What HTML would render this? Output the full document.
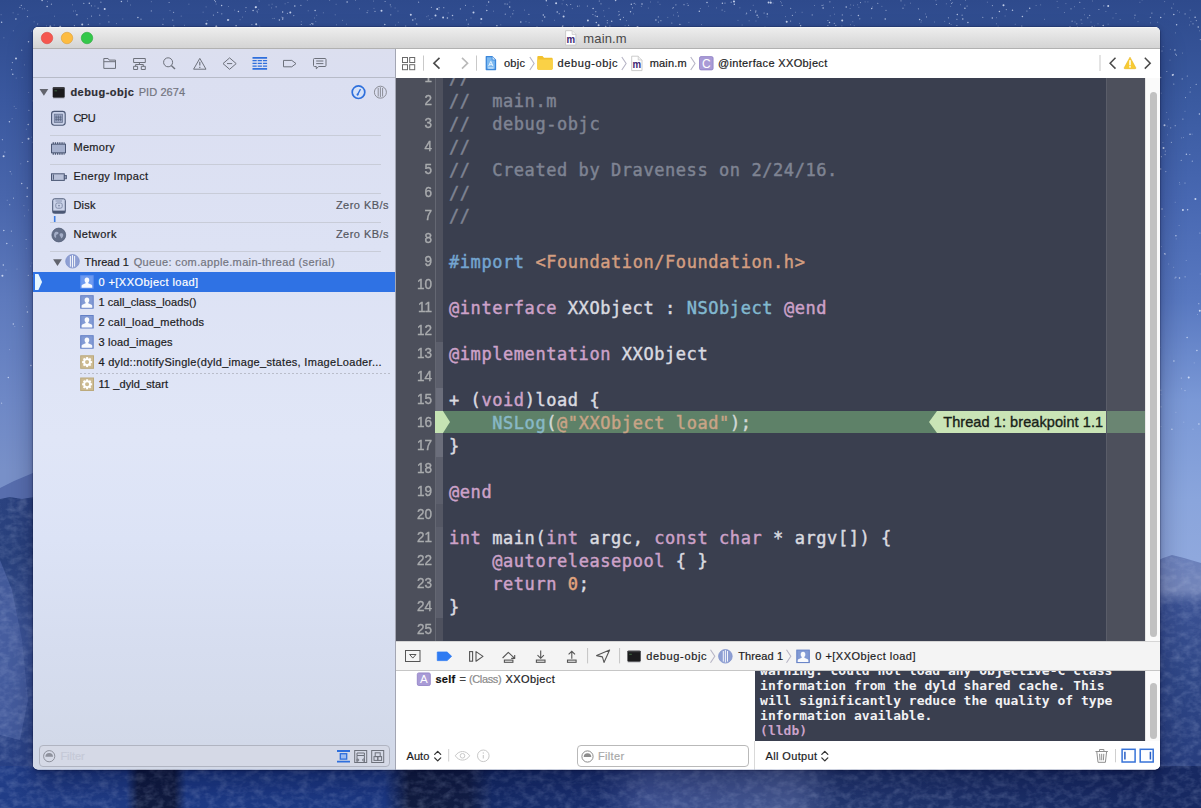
<!DOCTYPE html>
<html lang="en">
<head>
<meta charset="utf-8">
<title>main.m</title>
<style>
*{box-sizing:border-box;margin:0;padding:0}
html,body{width:1201px;height:808px;overflow:hidden}
body{position:relative;font-family:"Liberation Sans",sans-serif;font-size:11px;color:#1c1c1e;background:#3d5a9e}
.a,.t{position:absolute}
.t{white-space:nowrap;-webkit-text-stroke:.2px}
#bg{left:0;top:0;width:1201px;height:808px}
#shadow{left:33px;top:27px;width:1127px;height:742.5px;border-radius:5px;box-shadow:0 14px 26px rgba(0,5,40,.32),0 0 0 .5px rgba(0,0,30,.3),0 1px 5px rgba(0,0,30,.25)}
#win{left:0;top:0;width:1201px;height:808px;clip-path:inset(27px 41px 38.5px 33px round 5px);background:#fff}
#title{left:33px;top:27px;width:1127px;height:22px;background:linear-gradient(#ededed,#d4d4d4);border-bottom:1px solid #b1b1b1;border-top:1px solid #f6f6f6}
#side{left:33px;top:49px;width:362px;height:721px;background:linear-gradient(180deg,#dcdfef 0.0%,#dbdff1 4.0%,#dde2f4 27.9%,#e0e6f7 54.2%,#dce3f6 68.1%,#d6ddef 83.4%,#d2d9e9 96.5%,#d2d8e6 100.0%)}
#sidebd{left:395px;top:49px;width:1px;height:721px;background:#a3a6b3}
#navbd{left:33px;top:77px;width:362px;height:1px;background:#b7bbc8}
.sep{left:50px;width:331px;height:1px;background:#c8ccd8}
#sel{left:33px;top:272px;width:362px;height:20px;background:#2f72e4}
#dash{left:80px;top:373px;width:311px;height:1px;background:repeating-linear-gradient(90deg,#b9bdca 0 2px,transparent 2px 4px)}
#sfilter{left:38.5px;top:745px;width:351px;height:21.5px;border:1px solid #b0b4c1;border-radius:4px;background:#d5d9e6}
#jump{left:396px;top:49px;width:764px;height:29px;background:#fff}
#editor{left:396px;top:78px;width:749px;height:563px;background:#3a3f4f;overflow:hidden}
#gutter{left:0;top:0;width:39px;height:563px;background:#4c4f5b}
.rib{left:39px;width:8px}
#rcol{left:710px;top:0;width:39px;height:563px;background:#4d505c}
#hl{left:39px;top:333px;width:710px;height:22px;background:#5e8168}
#bplabel{left:533px;top:333px;width:177px;height:22px;background:#c9e4b6;clip-path:polygon(8px 0,100% 0,100% 100%,8px 100%,0 50%)}
#pc{left:39px;top:333px;width:15px;height:22px;background:#c5e3b3;clip-path:polygon(0 0,8px 0,100% 50%,8px 100%,0 100%)}
#scroll1{left:1145px;top:78px;width:15px;height:563px;background:#fafafa;border-left:1px solid #e7e7e7}
.thumb{background:#c1c1c1;border-radius:4px}
.ln{left:0;width:36px;text-align:right;font-size:15px;color:#a9abae;height:23px;line-height:23px;margin-top:-.9px;transform:scaleX(.9);transform-origin:100% 50%;-webkit-text-stroke:.4px}
.cl{left:53px;font-family:"DejaVu Sans Mono","Liberation Mono",monospace;font-size:17px;letter-spacing:.566px;height:23px;line-height:23px;white-space:pre;color:#dadbe0;-webkit-text-stroke:.45px}
.c{color:#7f8493}.h16 .s{color:#c8a487}.h16 .tt{color:#88b8c7}.h16{color:#d2d8d6}.k{color:#cda2c9}.s{color:#d39e80}.tt{color:#82b9d0}.p{color:#74a5d0}.n{color:#e2a57e}
#dbar{left:396px;top:641px;width:764px;height:30px;background:#f4f4f4;border-top:1px solid #d5d5d5;border-bottom:1px solid #c6c6c6}
#vars{left:396px;top:671px;width:358px;height:99px;background:#fff}
#varsbd{left:754px;top:741px;width:1px;height:29px;background:#d9d9d9}
#cons{left:754.5px;top:671px;width:390.5px;height:70px;background:#3a3f4f;overflow:hidden}
#scroll2{left:1145px;top:671px;width:15px;height:70px;background:#fafafa;border-left:1px solid #e7e7e7}
#consbar{left:755px;top:741px;width:405px;height:29px;background:#fff}
#vfilter{left:576.5px;top:745px;width:172.5px;height:21.5px;border:1px solid #b9b9b9;border-radius:4px;background:#fff}
.ct{left:5.6px;font-family:"DejaVu Sans Mono","Liberation Mono",monospace;font-size:13px;font-weight:bold;color:#f2f2f4;white-space:pre;height:15px;line-height:15px}
svg{position:absolute;left:0;top:0}
</style>
</head>
<body>
<div id="bg" class="a"><svg id="bgsvg" width="1201" height="808" viewBox="0 0 1201 808">
<defs>
<linearGradient id="sky" x1="0" y1="0" x2="0" y2="1"><stop offset="0.000" stop-color="#2e4a8c"/><stop offset="0.124" stop-color="#3a589f"/><stop offset="0.248" stop-color="#4966ac"/><stop offset="0.371" stop-color="#5e7abd"/><stop offset="0.495" stop-color="#6e88c6"/><stop offset="0.582" stop-color="#7890c8"/><stop offset="1.000" stop-color="#7890c8"/></linearGradient><linearGradient id="skyr" x1="0" y1="0" x2="0" y2="1"><stop offset="0.000" stop-color="#2e4a8c"/><stop offset="0.124" stop-color="#3a5aa0"/><stop offset="0.248" stop-color="#4868b2"/><stop offset="0.371" stop-color="#5878c0"/><stop offset="0.495" stop-color="#7a98d6"/><stop offset="0.619" stop-color="#8aa5dc"/><stop offset="0.693" stop-color="#8fa8dd"/><stop offset="1.000" stop-color="#8fa8dd"/></linearGradient>
<linearGradient id="mtl" x1="0" y1="0" x2="0" y2="1"><stop offset="0" stop-color="#2b427f"/><stop offset=".2" stop-color="#28407c"/><stop offset=".45" stop-color="#3b5395"/><stop offset=".75" stop-color="#2f4789"/><stop offset="1" stop-color="#1f3880"/></linearGradient>
<linearGradient id="mtr" x1="0" y1="555" x2="0" y2="808" gradientUnits="userSpaceOnUse"><stop offset="0.000" stop-color="#6a80bb"/><stop offset="0.067" stop-color="#6e82ba"/><stop offset="0.138" stop-color="#7486ba"/><stop offset="0.198" stop-color="#3a5193"/><stop offset="0.494" stop-color="#2e4686"/><stop offset="1.000" stop-color="#24397a"/></linearGradient>
<linearGradient id="mtb" x1="0" y1="0" x2="1" y2="0"><stop offset="0" stop-color="#213d87"/><stop offset=".105" stop-color="#1f3b85"/><stop offset=".115" stop-color="#101b40"/><stop offset=".145" stop-color="#101b40"/><stop offset=".155" stop-color="#1d3a86"/><stop offset=".32" stop-color="#1c3883"/><stop offset=".34" stop-color="#111c40"/><stop offset=".39" stop-color="#121e46"/><stop offset=".41" stop-color="#152b68"/><stop offset=".5" stop-color="#1b3070"/><stop offset=".54" stop-color="#3c4f8f"/><stop offset=".66" stop-color="#44568f"/><stop offset=".7" stop-color="#22366f"/><stop offset=".85" stop-color="#1b2e67"/><stop offset=".96" stop-color="#172962"/><stop offset="1" stop-color="#172962"/></linearGradient>
<linearGradient id="shd" x1="0" y1="0" x2="0" y2="1"><stop offset="0" stop-color="#000a20" stop-opacity=".0"/><stop offset="1" stop-color="#000a20" stop-opacity="0"/></linearGradient>
<filter id="nz" x="0" y="0" width="100%" height="100%"><feTurbulence type="fractalNoise" baseFrequency=".11 .16" numOctaves="3" seed="4" result="n"/><feColorMatrix type="matrix" values="0 0 0 0 .5  0 0 0 0 .58  0 0 0 0 .82  1.8 0 0 0 -.7"/></filter>
<clipPath id="mc"><path d="M0 499 L10 497 L22 499 L40 496 L40 808 L0 808Z"/><path d="M1155 560 L1166 556 L1178 558 L1190 560 L1201 562 L1201 808 L1155 808Z"/><rect x="0" y="766" width="1201" height="42"/></clipPath>
</defs>
<rect width="1201" height="808" fill="url(#sky)"/><rect x="600" width="601" height="808" fill="url(#skyr)"/>
<path d="M952.4 2.5h.01M785.4 16.6h.01M18.0 14.3h.01M228.4 6.5h.01M795.6 12.3h.01M850.1 8.5h.01M480.9 22.9h.01M1150.6 22.9h.01M1177.4 10.7h.01M756.0 21.0h.01M910.4 3.2h.01M229.0 19.8h.01M773.1 3.1h.01M395.1 8.0h.01M108.2 15.7h.01M1040.7 4.9h.01M1091.0 22.1h.01M724.8 11.4h.01M46.5 26.0h.01M716.4 7.9h.01M865.1 1.9h.01M336.5 24.8h.01M72.6 4.8h.01M687.2 3.6h.01M830.2 15.8h.01M841.9 26.0h.01M383.0 27.0h.01M1081.9 23.5h.01M529.1 22.6h.01M307.3 0.3h.01M814.4 5.5h.01M1098.0 23.8h.01M700.3 8.5h.01M854.2 25.7h.01M203.1 12.2h.01M1179.4 12.2h.01M37.8 23.6h.01M851.1 15.4h.01M950.6 0.5h.01M285.1 3.8h.01M857.7 4.8h.01M738.0 20.4h.01M951.1 24.5h.01M1120.1 19.5h.01M34.1 21.8h.01M960.6 4.7h.01M946.3 3.8h.01M1139.9 2.3h.01M672.5 8.4h.01M1015.2 24.3h.01M604.3 16.3h.01M1164.3 13.9h.01M323.3 12.8h.01M572.3 8.6h.01M742.1 25.0h.01M935.9 0.6h.01M272.9 18.5h.01M426.8 16.7h.01M524.6 10.1h.01M635.7 4.3h.01M1084.1 8.5h.01M1065.9 3.6h.01M872.6 7.0h.01M1094.6 26.1h.01M823.5 5.1h.01M618.3 15.4h.01M1189.4 25.0h.01M486.8 5.3h.01M934.4 22.0h.01M921.5 20.7h.01M867.9 1.9h.01M563.1 0.3h.01M767.1 16.8h.01M1134.6 18.0h.01M308.2 10.8h.01M234.7 10.1h.01M54.2 25.1h.01M355.5 0.4h.01M573.6 26.3h.01M547.3 5.5h.01M802.1 12.3h.01M881.9 6.4h.01M904.8 5.1h.01M47.4 1.6h.01M510.7 16.8h.01M650.5 2.0h.01M448.2 12.9h.01M749.1 20.8h.01M1105.9 11.5h.01M116.5 23.6h.01M833.5 7.6h.01M429.7 19.6h.01M526.0 21.7h.01M1074.6 6.7h.01M439.0 9.8h.01M1058.0 7.6h.01M626.4 20.6h.01M850.5 24.7h.01M852.8 21.7h.01M1190.2 10.1h.01M245.4 11.5h.01M1164.7 1.6h.01M701.5 24.6h.01M130.5 5.0h.01M269.0 5.0h.01M207.2 20.5h.01M579.6 6.0h.01M1138.0 21.6h.01M633.6 13.9h.01M1189.3 17.8h.01M13.1 12.8h.01M188.9 4.2h.01M765.0 26.8h.01M987.3 2.2h.01M500.8 24.8h.01M374.0 8.4h.01M432.0 18.6h.01M996.5 17.7h.01M452.9 19.2h.01M677.5 12.4h.01M1190.9 21.6h.01M739.9 7.8h.01M648.3 8.1h.01M471.0 18.0h.01M240.1 19.7h.01M398.3 22.3h.01M850.7 4.9h.01M1005.1 16.0h.01M272.1 4.2h.01M921.0 22.2h.01M398.0 11.1h.01M22.3 8.9h.01M781.5 2.9h.01M1084.5 14.8h.01M753.2 5.3h.01M395.4 25.1h.01M673.4 15.1h.01M346.6 24.2h.01M688.9 22.4h.01M658.0 2.1h.01M965.4 0.4h.01M562.1 3.9h.01M316.7 15.3h.01M603.7 10.7h.01M834.6 14.2h.01M367.9 10.7h.01M799.5 23.4h.01M680.7 24.4h.01M1142.1 0.0h.01M359.4 8.8h.01M1075.0 22.0h.01M428.2 15.8h.01M37.4 24.3h.01M567.6 5.6h.01M1108.1 24.2h.01M242.6 17.1h.01M1057.1 1.4h.01M1044.4 19.3h.01M94.9 6.0h.01M853.4 5.3h.01M708.5 6.2h.01M1113.0 18.0h.01M54.5 16.2h.01M301.3 21.7h.01M342.5 20.4h.01M335.2 14.8h.01M1077.3 26.7h.01M554.4 20.3h.01M1116.0 13.5h.01M667.8 17.4h.01M625.1 25.7h.01M944.7 21.4h.01M216.2 4.1h.01M315.8 21.6h.01M950.7 6.4h.01M373.5 1.1h.01M746.1 14.2h.01M206.1 6.9h.01M73.4 11.1h.01M259.8 26.2h.01M170.0 10.6h.01M509.8 2.1h.01M733.7 1.1h.01M780.4 1.6h.01M1064.5 12.5h.01M258.7 9.4h.01M660.0 4.4h.01M257.6 12.6h.01M1036.1 5.5h.01M87.4 18.7h.01M329.7 0.5h.01M858.9 7.3h.01M184.4 25.3h.01M24.5 8.7h.01M99.9 23.8h.01M925.6 14.0h.01M473.2 6.4h.01M181.2 16.1h.01M163.3 19.1h.01M871.3 18.0h.01M271.5 7.9h.01M259.1 1.1h.01M281.8 17.1h.01M513.7 10.6h.01M336.1 4.3h.01M288.0 2.5h.01M27.7 10.6h.01M75.6 10.9h.01M391.0 6.8h.01M314.5 18.0h.01M493.6 11.2h.01M996.4 23.8h.01M1092.4 1.0h.01M609.0 8.3h.01M1173.4 4.0h.01M274.4 18.4h.01M1.1 14.7h.01M998.1 26.2h.01M416.4 23.9h.01M1157.7 22.3h.01M641.3 6.4h.01M151.3 1.7h.01M122.8 19.0h.01M28.7 92.5h.01M26.3 129.3h.01M22.1 77.5h.01M32.0 263.0h.01M32.8 142.3h.01M12.3 245.7h.01M9.4 349.6h.01M32.4 276.0h.01M26.4 306.7h.01M12.1 118.7h.01M16.0 108.5h.01M23.9 205.6h.01M3.9 37.8h.01M31.7 31.2h.01M11.7 174.0h.01M24.5 64.9h.01M22.4 326.5h.01M13.3 30.8h.01M7.2 200.3h.01M31.3 137.2h.01M32.7 100.9h.01M17.0 269.1h.01M30.7 266.1h.01M24.4 215.9h.01M16.2 78.1h.01M28.6 210.0h.01M26.3 248.4h.01M14.2 106.4h.01M20.8 163.8h.01M6.0 270.0h.01M14.8 326.5h.01M1179.1 225.5h.01M1168.6 119.2h.01M1190.4 87.5h.01M1161.0 426.5h.01M1161.2 93.2h.01M1163.2 46.5h.01M1176.2 238.9h.01M1179.6 182.6h.01M1182.4 53.1h.01M1179.8 184.3h.01M1199.6 30.8h.01M1170.3 49.4h.01M1186.2 260.5h.01M1183.8 422.2h.01M1197.6 314.5h.01M1164.8 216.4h.01M1168.7 264.0h.01M1166.7 112.5h.01M1200.2 274.0h.01M1183.6 137.5h.01M1173.7 267.3h.01M1193.0 429.2h.01M1185.0 111.3h.01M1181.4 388.8h.01M1161.3 246.6h.01M1161.0 394.6h.01M1160.0 347.4h.01M1194.2 362.9h.01M1181.6 137.9h.01M1167.2 126.1h.01M1192.1 134.2h.01M1167.6 134.8h.01M1170.0 60.2h.01M1175.2 202.3h.01M1175.9 412.4h.01M1175.6 32.9h.01M1162.9 142.5h.01" stroke="#e6eeff" stroke-width="0.9" stroke-linecap="round" opacity="0.4"/><path d="M559.2 13.7h.01M221.8 13.8h.01M108.9 21.9h.01M623.5 17.3h.01M251.9 24.6h.01M213.4 15.1h.01M722.1 10.0h.01M1151.9 13.1h.01M671.8 23.0h.01M19.9 7.3h.01M1070.0 26.5h.01M764.1 13.0h.01M1098.9 9.5h.01M949.4 23.3h.01M750.6 10.3h.01M731.2 2.2h.01M1193.0 23.8h.01M466.5 19.8h.01M901.0 0.8h.01M577.6 6.2h.01M1087.8 17.8h.01M1071.0 8.8h.01M257.1 11.2h.01M755.6 12.1h.01M822.1 5.4h.01M214.6 0.3h.01M415.2 18.8h.01M956.9 25.5h.01M782.2 5.5h.01M982.8 17.3h.01M418.6 2.2h.01M660.9 20.7h.01M827.9 25.5h.01M632.5 7.8h.01M1021.8 26.1h.01M688.2 5.4h.01M962.1 15.2h.01M829.9 1.8h.01M877.8 3.3h.01M300.9 5.3h.01M758.2 17.2h.01M151.3 10.9h.01M21.3 5.4h.01M607.3 20.5h.01M127.5 1.0h.01M74.4 25.7h.01M918.4 8.8h.01M618.9 11.6h.01M217.7 12.3h.01M755.9 10.9h.01M310.2 24.6h.01M1076.8 23.8h.01M792.4 15.4h.01M467.9 27.0h.01M27.4 16.6h.01M301.3 24.5h.01M609.9 26.1h.01M91.5 16.1h.01M566.6 4.6h.01M505.3 14.2h.01M439.1 7.7h.01M673.3 7.7h.01M51.4 4.2h.01M468.3 24.2h.01M88.3 24.4h.01M628.6 25.3h.01M725.0 3.1h.01M634.2 3.4h.01M1072.1 21.2h.01M431.4 7.3h.01M678.4 16.0h.01M812.2 14.9h.01M390.8 14.8h.01M99.7 15.2h.01M91.4 5.8h.01M98.1 8.2h.01M141.0 19.2h.01M465.5 5.3h.01M675.9 4.8h.01M619.3 14.7h.01M100.9 2.2h.01M1079.8 2.3h.01M172.8 20.1h.01M405.7 26.1h.01M592.9 14.5h.01M1150.3 17.3h.01M505.0 3.9h.01M215.5 1.7h.01M282.7 19.4h.01M658.4 22.1h.01M956.9 19.3h.01M311.6 23.5h.01M860.5 2.6h.01M562.9 25.8h.01M992.4 5.6h.01M367.1 12.6h.01M1135.0 15.2h.01M169.1 2.5h.01M512.8 13.8h.01M948.4 17.8h.01M601.0 3.8h.01M1185.1 13.9h.01M293.8 15.6h.01M162.9 24.4h.01M790.7 8.3h.01M886.0 10.3h.01M684.0 4.7h.01M770.7 1.0h.01M173.8 25.9h.01M564.4 11.1h.01M827.9 20.5h.01M1026.9 11.0h.01M679.7 24.4h.01M385.1 1.5h.01M1081.1 19.8h.01M903.0 8.2h.01M83.8 3.4h.01M967.1 6.0h.01M951.6 3.3h.01M1006.3 9.6h.01M835.8 25.3h.01M528.9 14.3h.01M790.6 21.1h.01M607.3 22.8h.01M936.4 4.5h.01M587.4 6.0h.01M599.3 1.0h.01M595.8 11.7h.01M1089.7 15.4h.01M173.6 12.3h.01M1196.3 20.6h.01M276.1 6.8h.01M834.3 23.3h.01M537.0 26.8h.01M375.0 11.4h.01M246.0 7.6h.01M1171.7 8.0h.01M1103.8 5.8h.01M460.4 8.9h.01M570.7 4.5h.01M507.2 4.1h.01M842.3 14.9h.01M595.2 15.8h.01M416.9 24.1h.01M926.5 16.9h.01M287.4 13.3h.01M658.3 16.9h.01M859.8 18.8h.01M746.6 13.2h.01M443.8 7.7h.01M390.3 4.8h.01M542.3 20.8h.01M1.6 403.2h.01M21.7 50.2h.01M10.2 171.6h.01M26.1 239.5h.01M11.6 69.6h.01M28.3 275.4h.01M2.4 139.7h.01M28.9 110.3h.01M4.8 152.0h.01M13.5 198.2h.01M11.4 231.1h.01M22.3 142.5h.01M9.7 204.7h.01M12.4 62.6h.01M1161.0 406.8h.01M1176.5 55.2h.01M1185.5 97.6h.01M1165.1 154.6h.01M1182.9 119.1h.01M1190.1 92.0h.01M1173.5 74.3h.01M1198.8 303.7h.01M1175.0 278.0h.01M1185.0 183.0h.01M1181.2 160.3h.01M1192.3 161.2h.01M1162.0 51.0h.01M1187.3 76.0h.01M1166.8 71.5h.01M1175.9 277.2h.01M1175.5 54.1h.01M1161.4 156.7h.01M1165.4 151.0h.01M1171.4 142.3h.01M1185.0 390.6h.01M1175.2 125.7h.01M1200.3 39.6h.01M1199.9 233.0h.01M1173.8 84.1h.01M1160.8 390.2h.01M1185.1 276.8h.01M1181.3 378.0h.01M1170.7 127.8h.01M1189.8 154.5h.01M1165.8 171.6h.01M1196.2 84.4h.01M1182.2 78.9h.01" stroke="#e6eeff" stroke-width="1.2" stroke-linecap="round" opacity="0.55"/><path d="M543.3 15.1h.01M557.2 11.9h.01M1198.2 26.9h.01M347.1 1.9h.01M121.4 1.6h.01M964.9 8.2h.01M253.1 10.6h.01M256.1 7.0h.01M236.1 25.7h.01M846.2 6.9h.01M42.1 0.5h.01M655.9 19.9h.01M885.2 19.0h.01M597.2 16.6h.01M238.4 11.6h.01M596.3 22.6h.01M593.1 8.5h.01M546.3 0.7h.01M544.7 16.9h.01M452.5 15.4h.01M1173.8 14.5h.01M384.8 24.6h.01M620.3 19.5h.01M767.3 14.1h.01M496.9 25.8h.01M520.8 22.0h.01M1022.4 16.5h.01M279.4 20.0h.01M999.4 11.4h.01M221.6 5.5h.01M15.9 18.9h.01M615.6 0.4h.01M962.8 19.0h.01M605.7 26.5h.01M1195.1 17.2h.01M562.5 26.4h.01M699.3 11.3h.01M1176.6 24.7h.01M412.8 20.1h.01M89.3 3.2h.01M509.7 7.0h.01M823.1 8.1h.01M1103.2 25.4h.01M957.3 14.6h.01M1160.7 17.6h.01M76.9 14.8h.01M294.8 6.0h.01M992.3 18.0h.01M967.9 22.5h.01M137.9 17.5h.01M312.8 24.0h.01M642.0 4.1h.01M1.6 22.2h.01M1029.7 8.2h.01M631.3 4.3h.01M488.6 2.0h.01M611.7 21.3h.01M734.3 4.3h.01M1092.1 26.8h.01M722.4 3.3h.01M583.4 26.9h.01M630.5 11.7h.01M871.7 8.5h.01M282.8 17.9h.01M447.4 17.9h.01M282.6 11.9h.01M858.4 15.5h.01M707.0 2.4h.01M829.5 22.4h.01M47.1 6.5h.01M1012.5 10.3h.01M315.1 10.6h.01M919.6 19.5h.01M486.8 10.4h.01M757.1 15.3h.01M800.6 25.8h.01M27.8 161.5h.01M27.4 311.9h.01M27.3 187.9h.01M21.7 183.5h.01M6.8 243.5h.01M3.8 230.5h.01M13.3 323.9h.01M30.9 365.6h.01M8.3 377.6h.01M28.2 124.4h.01M28.5 41.8h.01M12.8 74.3h.01M9.4 121.7h.01M27.1 196.5h.01M3.3 265.1h.01M1190.0 134.2h.01M1160.6 77.6h.01M1164.6 253.7h.01M1186.4 154.2h.01M1162.0 209.1h.01M1165.1 253.9h.01M1187.6 209.7h.01M1175.9 235.8h.01M1196.9 350.5h.01M1171.9 429.3h.01M1187.1 337.4h.01M1174.9 50.0h.01M1198.9 424.1h.01M1160.6 168.9h.01M1173.9 361.0h.01M1179.5 278.0h.01M1199.4 114.0h.01" stroke="#e6eeff" stroke-width="1.5" stroke-linecap="round" opacity="0.7"/><path d="M50.3 26.5h.01M104.7 9.0h.01M255.7 7.3h.01M770.8 2.7h.01M228.0 20.0h.01M786.7 21.8h.01M256.2 24.3h.01M1108.2 5.9h.01M842.2 20.6h.01M734.0 1.6h.01M60.2 26.7h.01M637.5 26.9h.01M443.1 17.6h.01M381.5 10.8h.01M410.8 14.8h.01M473.5 12.5h.01M481.3 18.9h.01M1003.5 5.3h.01M556.1 3.3h.01M216.3 26.6h.01M82.2 24.6h.01M598.6 25.2h.01M206.4 23.8h.01M768.6 2.4h.01M587.9 20.6h.01M290.3 12.5h.01M437.2 9.1h.01M563.6 16.6h.01M435.5 15.6h.01M16.0 58.6h.01M28.5 138.7h.01M3.6 156.3h.01M2.4 275.7h.01M1199.8 310.8h.01M1188.7 377.5h.01M1195.4 198.9h.01M1163.5 147.9h.01M1172.7 74.9h.01M1182.9 210.0h.01M1164.5 125.2h.01" stroke="#e6eeff" stroke-width="2" stroke-linecap="round" opacity="0.8"/>
<path d="M0 488 L14 481 L33 473 L40 472 L40 520 L0 520Z" fill="#586eae"/>
<path d="M0 499 L10 497 L22 499 L40 496 L40 808 L0 808Z" fill="url(#mtl)"/>
<path d="M0 560 L12 590 L22 640 L28 700 L20 740 L0 735Z" fill="#4c63a4" opacity=".7"/>
<path d="M1155 562 L1163 558 L1172 555 L1184 558 L1201 563 L1201 808 L1155 808Z" fill="url(#mtr)"/>
<rect x="0" y="766" width="1201" height="42" fill="url(#mtb)"/>
<g clip-path="url(#mc)"><rect x="0" y="470" width="1201" height="338" filter="url(#nz)" opacity=".26"/></g>
</svg></div>
<div id="shadow" class="a"></div>
<div id="win" class="a">
<div id="title" class="a"></div>
<div id="side" class="a"></div>
<div id="sidebd" class="a"></div>
<div id="navbd" class="a"></div>
<div class="a sep" style="top:135px"></div>
<div class="a sep" style="top:164px"></div>
<div class="a sep" style="top:193px"></div>
<div class="a sep" style="top:222px"></div>
<div class="a sep" style="top:251px"></div>
<div id="sel" class="a"></div>
<div id="dash" class="a"></div>
<div id="sfilter" class="a"></div>
<div id="jump" class="a"></div>
<div id="editor" class="a">
<div id="gutter" class="a"></div>
<div class="a rib" style="top:0;height:563px;background:#4e515e"></div>
<div class="a rib" style="top:264px;height:162px;background:#5c5f6c"></div>
<div class="a rib" style="top:310px;height:69px;background:#6b6e7b"></div>
<div class="a rib" style="top:426px;height:23px;background:#545764"></div>
<div class="a rib" style="top:449px;height:91px;background:#5b5e6b"></div>
<div class="a" style="left:38.6px;top:0;width:1px;height:563px;background:#646772"></div>
<div class="a" style="left:710px;top:0;width:1px;height:563px;background:#5a5d69;z-index:1"></div>
<div id="rcol" class="a"></div>
<div id="hl" class="a"></div>
<div class="a" style="left:710px;top:333px;width:39px;height:22px;background:#6a8572"></div>
<div id="pc" class="a"></div>
<div id="bplabel" class="a"></div>
<div class="a ln" style="top:-12px">1</div>
<div class="a cl" style="top:-11.5px"><span class="c">//</span></div>
<div class="a ln" style="top:11px">2</div>
<div class="a cl" style="top:11.5px"><span class="c">//  main.m</span></div>
<div class="a ln" style="top:34px">3</div>
<div class="a cl" style="top:34.5px"><span class="c">//  debug-objc</span></div>
<div class="a ln" style="top:57px">4</div>
<div class="a cl" style="top:57.5px"><span class="c">//</span></div>
<div class="a ln" style="top:80px">5</div>
<div class="a cl" style="top:80.5px"><span class="c">//  Created by Draveness on 2/24/16.</span></div>
<div class="a ln" style="top:103px">6</div>
<div class="a cl" style="top:103.5px"><span class="c">//</span></div>
<div class="a ln" style="top:126px">7</div>
<div class="a cl" style="top:126.5px"><span class="c">//</span></div>
<div class="a ln" style="top:149px">8</div>
<div class="a ln" style="top:172px">9</div>
<div class="a cl" style="top:172.5px"><span class="p">#import</span> <span class="s">&lt;Foundation/Foundation.h&gt;</span></div>
<div class="a ln" style="top:195px">10</div>
<div class="a ln" style="top:218px">11</div>
<div class="a cl" style="top:218.5px"><span class="k">@interface</span> XXObject : <span class="tt">NSObject</span> <span class="k">@end</span></div>
<div class="a ln" style="top:241px">12</div>
<div class="a ln" style="top:264px">13</div>
<div class="a cl" style="top:264.5px"><span class="k">@implementation</span> XXObject</div>
<div class="a ln" style="top:287px">14</div>
<div class="a ln" style="top:310px">15</div>
<div class="a cl" style="top:310.5px">+ (<span class="k">void</span>)load {</div>
<div class="a ln" style="top:333px">16</div>
<div class="a cl h16" style="top:333.5px">    <span class="tt">NSLog</span>(<span class="s">@"XXObject load"</span>);</div>
<div class="a ln" style="top:356px">17</div>
<div class="a cl" style="top:356.5px">}</div>
<div class="a ln" style="top:379px">18</div>
<div class="a ln" style="top:402px">19</div>
<div class="a cl" style="top:402.5px"><span class="k">@end</span></div>
<div class="a ln" style="top:425px">20</div>
<div class="a ln" style="top:448px">21</div>
<div class="a cl" style="top:448.5px"><span class="k">int</span> main(<span class="k">int</span> argc, <span class="k">const</span> <span class="k">char</span> * argv[]) {</div>
<div class="a ln" style="top:471px">22</div>
<div class="a cl" style="top:471.5px">    <span class="k">@autoreleasepool</span> { }</div>
<div class="a ln" style="top:494px">23</div>
<div class="a cl" style="top:494.5px">    <span class="k">return</span> <span class="n">0</span>;</div>
<div class="a ln" style="top:517px">24</div>
<div class="a cl" style="top:517.5px">}</div>
<div class="a ln" style="top:540px">25</div>
</div>
<div id="scroll1" class="a"><div class="a thumb" style="left:3.5px;top:14px;width:7.5px;height:545px"></div></div>
<div id="dbar" class="a"></div>
<div id="vars" class="a"></div>
<div id="cons" class="a">
<div class="a ct" style="top:-8.40px">warning: could not load any Objective-C class</div>
<div class="a ct" style="top:6.60px">information from the dyld shared cache. This</div>
<div class="a ct" style="top:21.60px">will significantly reduce the quality of type</div>
<div class="a ct" style="top:36.60px">information available.</div>
<div class="a ct" style="top:51.60px"><span style="color:#cba3ca">(lldb)</span></div>
</div>
<div id="scroll2" class="a"><div class="a thumb" style="left:3.5px;top:12px;width:7.5px;height:56px"></div></div>
<div id="consbar" class="a"></div>
<div id="varsbd" class="a"></div>
<div id="vfilter" class="a"></div>
<div class="t" id="t0" style="left:583.30px;top:30.20px;height:17px;line-height:17px;font-size:13px;color:#484848;letter-spacing:0.155px;-webkit-text-stroke:0;">main.m</div>
<div class="t" id="t1" style="left:70.40px;top:84.99px;height:14px;line-height:14px;font-size:11px;color:#2d2d33;font-weight:bold;letter-spacing:0.469px;">debug-objc</div>
<div class="t" id="t2" style="left:138.70px;top:84.99px;height:14px;line-height:14px;font-size:11px;color:#73757f;letter-spacing:0.075px;">PID 2674</div>
<div class="t" id="t3" style="left:73.40px;top:111.39px;height:14px;line-height:14px;font-size:11px;color:#1c1c1e;letter-spacing:-0.517px;">CPU</div>
<div class="t" id="t4" style="left:73.40px;top:139.99px;height:14px;line-height:14px;font-size:11px;color:#1c1c1e;letter-spacing:0.333px;">Memory</div>
<div class="t" id="t5" style="left:73.40px;top:169.19px;height:14px;line-height:14px;font-size:11px;color:#1c1c1e;letter-spacing:0.315px;">Energy Impact</div>
<div class="t" id="t6" style="left:73.40px;top:197.99px;height:14px;line-height:14px;font-size:11px;color:#1c1c1e;letter-spacing:0.270px;">Disk</div>
<div class="t" id="t7" style="left:73.40px;top:226.99px;height:14px;line-height:14px;font-size:11px;color:#1c1c1e;letter-spacing:0.443px;">Network</div>
<div class="t" id="t8" style="left:335.90px;top:197.99px;height:14px;line-height:14px;font-size:11px;color:#55575f;letter-spacing:0.474px;">Zero KB/s</div>
<div class="t" id="t9" style="left:335.90px;top:226.99px;height:14px;line-height:14px;font-size:11px;color:#55575f;letter-spacing:0.474px;">Zero KB/s</div>
<div class="t" id="t10" style="left:84.60px;top:254.99px;height:14px;line-height:14px;font-size:11px;color:#1c1c1e;letter-spacing:0.038px;">Thread 1</div>
<div class="t" id="t11" style="left:133.70px;top:254.99px;height:14px;line-height:14px;font-size:11px;color:#73757f;letter-spacing:0.352px;">Queue: com.apple.main-thread (serial)</div>
<div class="t" id="t12" style="left:98.40px;top:274.99px;height:14px;line-height:14px;font-size:11px;color:#fff;letter-spacing:0.451px;">0 +[XXObject load]</div>
<div class="t" id="t13" style="left:98.40px;top:294.69px;height:14px;line-height:14px;font-size:11px;color:#1c1c1e;letter-spacing:0.073px;">1 call_class_loads()</div>
<div class="t" id="t14" style="left:98.40px;top:314.69px;height:14px;line-height:14px;font-size:11px;color:#1c1c1e;letter-spacing:0.266px;">2 call_load_methods</div>
<div class="t" id="t15" style="left:98.40px;top:334.69px;height:14px;line-height:14px;font-size:11px;color:#1c1c1e;letter-spacing:0.220px;">3 load_images</div>
<div class="t" id="t16" style="left:98.40px;top:355.19px;height:14px;line-height:14px;font-size:11px;color:#1c1c1e;letter-spacing:0.303px;">4 dyld::notifySingle(dyld_image_states, ImageLoader...</div>
<div class="t" id="t17" style="left:98.40px;top:376.69px;height:14px;line-height:14px;font-size:11px;color:#1c1c1e;letter-spacing:0.108px;">11 _dyld_start</div>
<div class="t" id="t18" style="left:60.40px;top:749.19px;height:14px;line-height:14px;font-size:11px;color:#c5c9d7;letter-spacing:-0.011px;">Filter</div>
<div class="t" id="t19" style="left:503.90px;top:56.19px;height:14px;line-height:14px;font-size:11px;color:#1c1c1e;letter-spacing:0.337px;">objc</div>
<div class="t" id="t20" style="left:557.50px;top:56.19px;height:14px;line-height:14px;font-size:11px;color:#1c1c1e;letter-spacing:0.618px;">debug-objc</div>
<div class="t" id="t21" style="left:649.70px;top:56.19px;height:14px;line-height:14px;font-size:11px;color:#1c1c1e;letter-spacing:0.168px;">main.m</div>
<div class="t" id="t22" style="left:717.90px;top:56.39px;height:14px;line-height:14px;font-size:11px;color:#1c1c1e;letter-spacing:0.362px;">@interface XXObject</div>
<div class="t" id="t23" style="left:943.20px;top:412.98px;height:19px;line-height:19px;font-size:14.5px;color:#182218;letter-spacing:0.083px;-webkit-text-stroke:.35px;">Thread 1: breakpoint 1.1</div>
<div class="t" id="t24" style="left:646.30px;top:649.19px;height:14px;line-height:14px;font-size:11px;color:#1c1c1e;letter-spacing:0.640px;">debug-objc</div>
<div class="t" id="t25" style="left:738.30px;top:649.19px;height:14px;line-height:14px;font-size:11px;color:#1c1c1e;letter-spacing:0.096px;">Thread 1</div>
<div class="t" id="t26" style="left:815.30px;top:649.19px;height:14px;line-height:14px;font-size:11px;color:#1c1c1e;letter-spacing:0.481px;">0 +[XXObject load]</div>
<div class="t" id="t27" style="left:435.50px;top:671.79px;height:14px;line-height:14px;font-size:11px;color:#111;font-weight:bold;letter-spacing:0.210px;">self</div>
<div class="t" id="t28" style="left:459.50px;top:671.79px;height:14px;line-height:14px;font-size:11px;color:#444;letter-spacing:-0.838px;">=</div>
<div class="t" id="t29" style="left:468.90px;top:671.79px;height:14px;line-height:14px;font-size:11px;color:#8a8a8a;letter-spacing:-0.341px;">(Class)</div>
<div class="t" id="t30" style="left:505.50px;top:671.79px;height:14px;line-height:14px;font-size:11px;color:#1c1c1e;letter-spacing:0.390px;">XXObject</div>
<div class="t" id="t31" style="left:406.60px;top:748.89px;height:14px;line-height:14px;font-size:11px;color:#1c1c1e;letter-spacing:0.020px;">Auto</div>
<div class="t" id="t32" style="left:597.90px;top:748.89px;height:14px;line-height:14px;font-size:11px;color:#a8a8a8;letter-spacing:0.349px;">Filter</div>
<div class="t" id="t33" style="left:765.50px;top:748.79px;height:14px;line-height:14px;font-size:11px;color:#1c1c1e;letter-spacing:0.365px;">All Output</div>
<svg id="ov" width="1201" height="808" viewBox="0 0 1201 808">
<circle cx="47" cy="38" r="5.75" fill="#f5574f" stroke="#dc443e" stroke-width=".6"/>
<circle cx="67" cy="38" r="5.75" fill="#fdbc40" stroke="#dd9e33" stroke-width=".6"/>
<circle cx="87" cy="38" r="5.75" fill="#34c84a" stroke="#26a83a" stroke-width=".6"/>
<path d="M565.6 30.7h6.500000000000001l3.8 3.8v10.600000000000001h-10.3z" fill="#fff" stroke="#c6c6c6" stroke-width=".9"/><path d="M572.1 30.7v3.8h3.8" fill="#f0f0f0" stroke="#c6c6c6" stroke-width=".7"/>
<text x="566.5" y="42.6" font-family="Liberation Sans,sans-serif" font-weight="bold" font-size="11" fill="#3d2573" textLength="8.600000000000001" lengthAdjust="spacingAndGlyphs">m</text>
<g fill="none" stroke="#6d717b" stroke-width="1">
<path d="M103.8 58.5h4.3l1.1 1.6h6.3v8.3h-11.7zM103.8 61.7h11.7"/>
<path d="M133.6 58.5h11.7v4h-11.7zM133.6 66.3h4v3.2h-4zM141.3 66.3h4v3.2h-4zM139.45 62.5v2M135.6 66.3v-1.8h7.7v1.8"/>
<circle cx="168.1" cy="62.3" r="4.5"/><path d="M171.3 65.6l3.7 3.5" stroke-width="1.4"/>
<path d="M199.8 58.4l6.2 10.8h-12.4z" stroke-linejoin="round"/><path d="M199.8 61.8v3.8M199.8 66.7v1.2" stroke-width="1.2"/>
<path d="M229.6 57.9l6.6 5.7l-6.6 5.7l-6.6-5.7z" stroke-linejoin="round"/><path d="M227 63.6h5.2"/>
<path d="M283.5 60.4h8.3l4.2 3.2l-4.2 3.2h-8.3z" stroke-linejoin="round"/>
<path d="M314.5 58.5h10.5a1 1 0 0 1 1 1v6a1 1 0 0 1-1 1h-6.3l-2.4 2.3v-2.3h-1.8a1 1 0 0 1-1-1v-6a1 1 0 0 1 1-1zM316.2 61h7.2M316.2 63.6h7.2"/>
</g>
<g stroke="#2f6fdc" fill="none"><path d="M252.5 57.9h14.6M252.5 68.9h14.6" stroke-width="1.7"/><path d="M252.5 60.7h14.6M252.5 63.4h14.6M252.5 66.1h14.6" stroke-width="1.3" stroke-dasharray="4.2 1"/></g>
<path d="M39.5 89h8.8l-4.4 6.8z" fill="#62646d"/>
<rect x="52.7" y="87.2" width="12" height="10.5" rx="1.3" fill="#1b1b1d"/><rect x="52.7" y="87.2" width="12" height="1.6" rx=".8" fill="#3d3d40"/><rect x="53.0" y="97.7" width="11.4" height=".8" fill="#8a8d98" opacity=".6"/><path d="M54.5 90.8h2.6" stroke="#7d7" stroke-width=".7" opacity=".55"/>
<circle cx="358.5" cy="92.2" r="6.3" fill="#d6e2f8" stroke="#2f70dc" stroke-width="1.7"/><path d="M357.6 94.6l2.6-5" stroke="#2f70dc" stroke-width="1.3" stroke-linecap="round"/><circle cx="357.6" cy="94.6" r="1.1" fill="#2f70dc"/>
<circle cx="380.4" cy="92.2" r="6" fill="none" stroke="#8b8d96" stroke-width="1"/><path d="M378.2 87.9v8.6M380.4 87.2v10M382.6 87.9v8.6" stroke="#8b8d96" stroke-width="1"/>
<rect x="51.6" y="111.4" width="13.6" height="13.8" rx="2.6" fill="#c9d1e8" stroke="#4b5774" stroke-width="1.1"/><rect x="54.3" y="114.2" width="8.2" height="8.2" fill="#98a3c0" stroke="#6a7693" stroke-width=".8"/><path d="M56.2 115.5v5.6M58.4 115.5v5.6M60.6 115.5v5.6M55.2 117.2h6.4M55.2 119.4h6.4" stroke="#56627e" stroke-width=".7"/>
<rect x="51.5" y="144.2" width="14" height="8.6" fill="#a5b0cd" stroke="#4b5774" stroke-width="1"/><path d="M52.6 143.1h12M52.6 153.9h12" stroke="#4b5774" stroke-width="1.6" stroke-dasharray="1.3 .9"/>
<rect x="51.5" y="173.8" width="12.8" height="6.6" fill="#b9c1d9" stroke="#4b5774" stroke-width="1"/><rect x="64.3" y="175.4" width="2.2" height="3.4" fill="#8d97b3" stroke="#4b5774" stroke-width=".8"/><path d="M53.4 174.5v5.2" stroke="#4b5774" stroke-width="1"/>
<rect x="52.7" y="198.8" width="12.6" height="14.4" rx="1.8" fill="#cbd3e9" stroke="#4b5774" stroke-width="1"/><rect x="52.7" y="210.6" width="12.6" height="2.6" fill="#4b5774"/><rect x="55.8" y="203" width="6.4" height="5.2" rx="1.6" fill="none" stroke="#7a86a3" stroke-width=".9"/><path d="M55.5 201h6.5" stroke="#7a86a3" stroke-width=".8"/><circle cx="59" cy="205.6" r=".9" fill="#7a86a3"/>
<rect x="53.9" y="216" width="1.6" height="6" fill="#3b7be2"/>
<circle cx="58.8" cy="235" r="6.9" fill="#646f88" stroke="#535e77" stroke-width=".8"/><path d="M55 232.2c1.2-.8 2.8-.6 3.4.2.5.9-.4 1.7-1.4 2-.9.3-1.1 1.200-.8 2.300.2 1-.6 1.400-1.300.7-1-1-1.300-3.800.1-5.200zM60.300 233.400c.9-.5 2.400-.2 2.800.8.4 1.100-.1 2.700-1.100 3.700-.7.600-1.300.1-1.300-.8 0-.8-.9-1.100-1.100-1.900-.200-.700.100-1.400.7-1.800z" fill="#a3adc6"/>
<path d="M53.1 259.2h8.8l-4.4 6.8z" fill="#62646d"/>
<circle cx="72.5" cy="261.3" r="6.8" fill="#8e9fd3" stroke="#8093cc" stroke-width=".8"/>
<path d="M70.4 256.0v10.6M72.5 255.10000000000002v12.4M74.6 256.0v10.6" stroke="#fff" stroke-width=".9" fill="none"/>
<path d="M35 274h3.400l3.700 8l-3.700 8h-3.400z" fill="#e6f6ff"/>
<g transform="translate(80.2 275.2)"><rect x=".5" y=".5" width="12.5" height="12.5" fill="#6f9bf0" stroke="#5f8ff0"/>
<path d="M6.75 2.2c1.5 0 2.3 1.1 2.3 2.6 0 1-.4 1.9-1 2.4v.9l3.3 1.5c.5.3.7.7.7 1.2v1.7H1.4v-1.7c0-.5.2-.9.7-1.2l3.3-1.5v-.9c-.6-.5-1-1.4-1-2.4 0-1.5.8-2.6 2.35-2.6z" fill="#fff" opacity=".95"/></g>
<g transform="translate(80.2 295.2)"><rect x=".5" y=".5" width="12.5" height="12.5" fill="#829ad4" stroke="#6480c6"/>
<path d="M6.75 2.2c1.5 0 2.3 1.1 2.3 2.6 0 1-.4 1.9-1 2.4v.9l3.3 1.5c.5.3.7.7.7 1.2v1.7H1.4v-1.7c0-.5.2-.9.7-1.2l3.3-1.5v-.9c-.6-.5-1-1.4-1-2.4 0-1.5.8-2.6 2.35-2.6z" fill="#fff" opacity=".95"/></g>
<g transform="translate(80.2 315)"><rect x=".5" y=".5" width="12.5" height="12.5" fill="#829ad4" stroke="#6480c6"/>
<path d="M6.75 2.2c1.5 0 2.3 1.1 2.3 2.6 0 1-.4 1.9-1 2.4v.9l3.3 1.5c.5.3.7.7.7 1.2v1.7H1.4v-1.7c0-.5.2-.9.7-1.2l3.3-1.5v-.9c-.6-.5-1-1.4-1-2.4 0-1.5.8-2.6 2.35-2.6z" fill="#fff" opacity=".95"/></g>
<g transform="translate(80.2 335.2)"><rect x=".5" y=".5" width="12.5" height="12.5" fill="#829ad4" stroke="#6480c6"/>
<path d="M6.75 2.2c1.5 0 2.3 1.1 2.3 2.6 0 1-.4 1.9-1 2.4v.9l3.3 1.5c.5.3.7.7.7 1.2v1.7H1.4v-1.7c0-.5.2-.9.7-1.2l3.3-1.5v-.9c-.6-.5-1-1.4-1-2.4 0-1.5.8-2.6 2.35-2.6z" fill="#fff" opacity=".95"/></g>
<g transform="translate(80.2 355.3)"><rect x=".5" y=".5" width="12.8" height="12.5" fill="#cdbb92" stroke="#bba97c"/>
<g transform="translate(6.9 6.8)"><rect x="-1" y="-5" width="2" height="2.2" fill="#fff" transform="rotate(0)"/><rect x="-1" y="-5" width="2" height="2.2" fill="#fff" transform="rotate(45)"/><rect x="-1" y="-5" width="2" height="2.2" fill="#fff" transform="rotate(90)"/><rect x="-1" y="-5" width="2" height="2.2" fill="#fff" transform="rotate(135)"/><rect x="-1" y="-5" width="2" height="2.2" fill="#fff" transform="rotate(180)"/><rect x="-1" y="-5" width="2" height="2.2" fill="#fff" transform="rotate(225)"/><rect x="-1" y="-5" width="2" height="2.2" fill="#fff" transform="rotate(270)"/><rect x="-1" y="-5" width="2" height="2.2" fill="#fff" transform="rotate(315)"/><circle r="3" fill="none" stroke="#fff" stroke-width="1.9"/></g></g>
<g transform="translate(80.2 377.5)"><rect x=".5" y=".5" width="12.8" height="12.5" fill="#cdbb92" stroke="#bba97c"/>
<g transform="translate(6.9 6.8)"><rect x="-1" y="-5" width="2" height="2.2" fill="#fff" transform="rotate(0)"/><rect x="-1" y="-5" width="2" height="2.2" fill="#fff" transform="rotate(45)"/><rect x="-1" y="-5" width="2" height="2.2" fill="#fff" transform="rotate(90)"/><rect x="-1" y="-5" width="2" height="2.2" fill="#fff" transform="rotate(135)"/><rect x="-1" y="-5" width="2" height="2.2" fill="#fff" transform="rotate(180)"/><rect x="-1" y="-5" width="2" height="2.2" fill="#fff" transform="rotate(225)"/><rect x="-1" y="-5" width="2" height="2.2" fill="#fff" transform="rotate(270)"/><rect x="-1" y="-5" width="2" height="2.2" fill="#fff" transform="rotate(315)"/><circle r="3" fill="none" stroke="#fff" stroke-width="1.9"/></g></g>
<circle cx="49.2" cy="756.2" r="5.6" fill="none" stroke="#8e919c" stroke-width="1"/><path d="M45.400000000000006 756.7a3.8 3.8 0 0 1 7.600 0z" fill="#8e919c"/>
<g fill="none"><path d="M337 751h13M337 761.700h13" stroke="#2f6fdc" stroke-width="1.8"/><rect x="340.300" y="753.700" width="6.400" height="5.400" fill="#9dbcf2" stroke="#2f6fdc" stroke-width="1.300"/></g>
<g fill="none" stroke="#6d717b" stroke-width="1"><rect x="354.700" y="750.500" width="12" height="12"/><path d="M357 762v-6.500h7.400v6.500M357 755.500v-2.500h7.400v2.500"/><circle cx="357.800" cy="760" r="1"/><circle cx="363.600" cy="760" r="1"/></g>
<g fill="none" stroke="#6d717b" stroke-width="1"><rect x="371.700" y="750.500" width="12" height="12"/><rect x="375.200" y="752.800" width="5" height="3.800"/><rect x="374" y="756.600" width="3.800" height="3.800"/><rect x="377.800" y="756.600" width="3.800" height="3.800"/></g>
<g fill="none" stroke="#6a6a6a" stroke-width="1"><rect x="402.500" y="57.500" width="5" height="5"/><rect x="409.700" y="57.500" width="5" height="5"/><rect x="402.500" y="64.700" width="5" height="5"/><rect x="409.700" y="64.700" width="5" height="5"/></g>
<path d="M423.500 55.500v15.200M476.500 55.500v15.200M1100 55v16" stroke="#c9c9c9" stroke-width="1"/>
<path d="M439.500 57.800l-5.600 5.400l5.600 5.400" fill="none" stroke="#4a4a4a" stroke-width="1.600"/>
<path d="M462 57.800l5.600 5.400l-5.600 5.400" fill="none" stroke="#b9b9b9" stroke-width="1.600"/>
<path d="M486.300 56.600h5.800l3.400 3.400v9.500h-9.200z" fill="#7db9f0" stroke="#3a86da" stroke-width="1.300" stroke-linejoin="round"/><path d="M492.100 56.600v3.400h3.400" fill="#d6ebfc" stroke="#3a86da" stroke-width=".8"/><path d="M488.600 66.200l2.200-4.800l2.200 4.800M489.400 64.700h2.800M488.200 68h5.400" stroke="#e9f5ff" stroke-width="1" fill="none"/>
<path d="M529.8 57.0l4.3 6.5l-4.3 6.5" fill="none" stroke="#b7b5c6" stroke-width="1.1"/>
<path d="M537.300 57.200c0-.7.500-1.200 1.200-1.200h4l1.500 1.800h7.500c.7 0 1.200.5 1.200 1.200v9.500c0 .7-.5 1.200-1.200 1.200h-13c-.7 0-1.200-.5-1.200-1.200z" fill="#f2c12e"/><path d="M537.300 59.600h15.400v8.900c0 .7-.5 1.200-1.200 1.200h-13c-.7 0-1.200-.5-1.200-1.200z" fill="#fad146"/>
<path d="M621.8 57.0l4.3 6.5l-4.3 6.5" fill="none" stroke="#b7b5c6" stroke-width="1.1"/>
<path d="M631.7 56.2h6.500000000000001l3.8 3.8v10.600000000000001h-10.3z" fill="#fff" stroke="#c6c6c6" stroke-width=".9"/><path d="M638.2 56.2v3.8h3.8" fill="#f0f0f0" stroke="#c6c6c6" stroke-width=".7"/>
<text x="632.6" y="68.10000000000001" font-family="Liberation Sans,sans-serif" font-weight="bold" font-size="11" fill="#3d2573" textLength="8.600000000000001" lengthAdjust="spacingAndGlyphs">m</text>
<path d="M690.7 57.0l4.3 6.5l-4.3 6.5" fill="none" stroke="#b7b5c6" stroke-width="1.1"/>
<rect x="699.500" y="56.600" width="13.600" height="13.300" rx="1.500" fill="#a99bd6" stroke="#8e7fc4" stroke-width=".8"/><text x="706.300" y="67.600" font-family="Liberation Sans,sans-serif" font-size="12" fill="#fff" text-anchor="middle">C</text>
<path d="M1115.500 57.800l-5.400 5.400l5.400 5.400M1144.800 57.800l5.400 5.400l-5.400 5.400" fill="none" stroke="#4a4a4a" stroke-width="1.500"/>
<path d="M1130 57.200l5.800 10.600c.2.500 0 .9-.6.900h-10.400c-.600 0-.8-.4-.6-.9z" fill="#f8cb32" stroke="#e6b422" stroke-width=".6"/><path d="M1130 60.700v4" stroke="#fff" stroke-width="1.500" stroke-linecap="round"/><circle cx="1130" cy="66.800" r=".9" fill="#fff"/>
<g fill="none" stroke="#555" stroke-width="1"><rect x="405.500" y="650.500" width="14.500" height="11"/><path d="M409.600 654.500h6.400l-3.200 3.600z"/></g>
<path d="M437.300 652h9.800l4.500 4.300l-4.500 4.300h-9.800z" fill="#2f7bf2" stroke="#2f7bf2" stroke-width=".8" stroke-linejoin="round"/>
<g fill="none" stroke="#555" stroke-width="1.100"><rect x="469.600" y="651.600" width="3" height="9.600"/><path d="M476 651.600l7 4.800l-7 4.800z" stroke-linejoin="round"/></g>
<g fill="none" stroke="#555" stroke-width="1.1"><rect x="504.4" y="660.1" width="8.5" height="2.2"/><path d="M502.6 658l5.700-5.700l6.400 6.100M511.200 658.400h3.500v-3.500" stroke-linejoin="round"/></g>
<g fill="none" stroke="#555" stroke-width="1.1"><rect x="536.400" y="660.1" width="8.6" height="2.2"/><path d="M540.700 650.500v7.500M537.500 655.200l3.200 3.100l3.200-3.100"/></g>
<g fill="none" stroke="#555" stroke-width="1.1"><rect x="567.500" y="660.1" width="8.6" height="2.2"/><path d="M571.800 658.700v-7.400M568.600 654.400l3.200-3.100l3.200 3.100"/></g>
<path d="M587.600 648v15.400M619.600 648v15.400" stroke="#c4c4c4" stroke-width="1"/>
<path d="M609.600 650l-13 5.600l5.800 1.300l1.600 5.500z" fill="none" stroke="#555" stroke-width="1.100" stroke-linejoin="round"/>
<rect x="627.4" y="650.7" width="13.3" height="11" rx="1.3" fill="#1b1b1d"/><rect x="627.4" y="650.7" width="13.3" height="1.6" rx=".8" fill="#3d3d40"/><rect x="627.6999999999999" y="661.7" width="12.700000000000001" height=".8" fill="#8a8d98" opacity=".6"/><path d="M629.1999999999999 654.3000000000001h2.6" stroke="#7d7" stroke-width=".7" opacity=".55"/>
<path d="M710.5 649.8l4.3 6.5l-4.3 6.5" fill="none" stroke="#b7b5c6" stroke-width="1.1"/>
<circle cx="725.4" cy="656.3" r="6.8" fill="#8e9fd3" stroke="#8093cc" stroke-width=".8"/>
<path d="M723.3 651.0v10.6M725.4 650.0999999999999v12.4M727.5 651.0v10.6" stroke="#fff" stroke-width=".9" fill="none"/>
<path d="M786.5 649.8l4.3 6.5l-4.3 6.5" fill="none" stroke="#b7b5c6" stroke-width="1.1"/>
<g transform="translate(796.3 649.6)"><rect x=".5" y=".5" width="12.5" height="12.5" fill="#829ad4" stroke="#6480c6"/>
<path d="M6.75 2.2c1.5 0 2.3 1.1 2.3 2.6 0 1-.4 1.9-1 2.4v.9l3.3 1.5c.5.3.7.7.7 1.2v1.7H1.4v-1.7c0-.5.2-.9.7-1.2l3.3-1.5v-.9c-.6-.5-1-1.4-1-2.4 0-1.5.8-2.6 2.35-2.6z" fill="#fff" opacity=".95"/></g>
<rect x="417.300" y="672.900" width="13" height="12.600" rx="1.500" fill="#a99bd6" stroke="#8e7fc4" stroke-width=".8"/><text x="423.800" y="683.300" font-family="Liberation Sans,sans-serif" font-size="11.500" fill="#fff" text-anchor="middle">A</text>
<path d="M434.7 754.4l3 -3l3 3M434.7 757.9l3 3l3 -3" fill="none" stroke="#333" stroke-width="1.3" stroke-linecap="round" stroke-linejoin="round"/>
<path d="M448.700 749v12.500M1115.500 749v13.300" stroke="#cfcfcf" stroke-width="1"/>
<path d="M455.300 755.800c2-3 4.600-4.300 7.200-4.300s5.200 1.300 7.200 4.300c-2 3-4.600 4.300-7.200 4.300s-5.200-1.300-7.200-4.300z" fill="none" stroke="#c9c9c9" stroke-width="1"/><circle cx="462.500" cy="755.800" r="2.300" fill="none" stroke="#c9c9c9" stroke-width="1"/>
<circle cx="483.300" cy="755.800" r="5.800" fill="none" stroke="#c9c9c9" stroke-width="1"/><path d="M483.300 755v3.600" stroke="#c9c9c9" stroke-width="1.100"/><circle cx="483.300" cy="753" r=".7" fill="#c9c9c9"/>
<circle cx="587.5" cy="756.5" r="5.6" fill="none" stroke="#8c8c8c" stroke-width="1"/><path d="M583.7 757.0a3.8 3.8 0 0 1 7.600 0z" fill="#8c8c8c"/>
<path d="M821.8 754.4l3 -3l3 3M821.8 757.9l3 3l3 -3" fill="none" stroke="#333" stroke-width="1.3" stroke-linecap="round" stroke-linejoin="round"/>
<g fill="none" stroke="#8f8f8f" stroke-width="1"><path d="M1096.800 751.800l1.200 10.500h7.400l1.200-10.500M1095.500 751.500h12.400M1099.500 751.300v-1.800h4.400v1.800M1099.600 753.800l.4 6.500M1101.700 753.800v6.500M1103.800 753.800l-.4 6.500"/></g>
<g fill="#fdfeff" stroke="#3672d8" stroke-width="1.500"><rect x="1122.100" y="749.300" width="13" height="12.700"/><rect x="1140.200" y="749.300" width="13" height="12.700"/></g><path d="M1124.900 751.800v7.700M1150.400 751.800v7.700" stroke="#2a5fc4" stroke-width="1.500"/>
</svg>
</div>
</body>
</html>
